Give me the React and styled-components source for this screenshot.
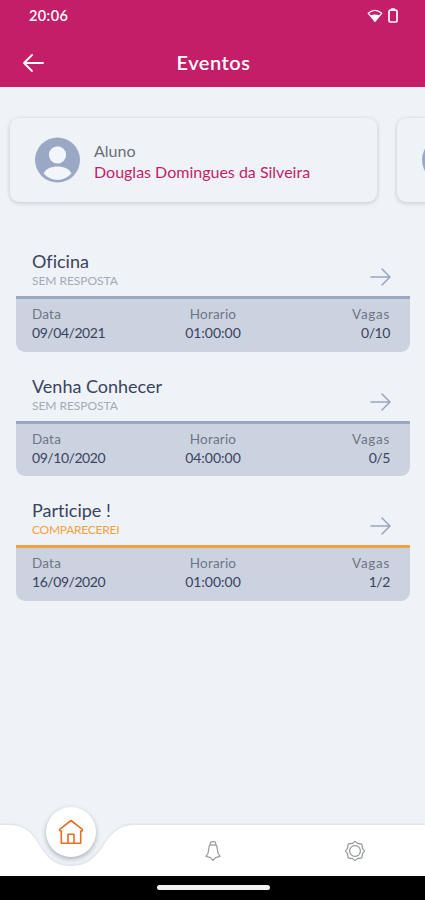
import React from "react"
import styled, { ThemeProvider, createGlobalStyle } from "styled-components"

const theme = {
  primary: "#c41e69",
  background: "#eff3f8",
  dark: "#3a4260",
  grey: "#6e7587",
  muted: "#9ba8c1",
  panel: "#ccd3e0",
  orange: "#f3a13d",
  white: "#fff",
}

const GlobalStyle = createGlobalStyle`
  * {
    box-sizing: border-box;
  }
  body {
    margin: 0;
    font-family: Lato, "Open Sans", sans-serif;
    font-variant-ligatures: none;
    background: ${theme.background};
  }
  p, h1, h2 {
    margin: 0;
    font-weight: 400;
    white-space: nowrap;
  }
  svg {
    display: block;
  }
`

const Screen = styled.div`
  display: flex;
  flex-direction: column;
  width: 425px;
  height: 900px;
  overflow: hidden;
  background: ${({ theme }) => theme.background};
`

const Top = styled.header`
  height: 87px;
  flex-shrink: 0;
  color: ${({ theme }) => theme.white};
  background: ${({ theme }) => theme.primary};
`

const StatusBar = styled.div`
  display: flex;
  align-items: center;
  justify-content: space-between;
  height: 31px;
  padding: 0 27px 0 29px;
`

const Time = styled.p`
  font-size: 14.5px;
  line-height: 18px;
  font-weight: 600;
  letter-spacing: 0.4px;
`

const StatusIcons = styled.div`
  display: flex;
  align-items: center;
  gap: 5px;
`

const TitleBar = styled.div`
  display: grid;
  grid-template-columns: 48px 1fr 48px;
  align-items: center;
  height: 63px;
  margin-right: 21px;
  padding-left: 22px;
`

const Title = styled.h1`
  padding: 0 0 2px 1px;
  text-align: center;
  font-size: 20px;
  line-height: 26px;
  font-weight: 600;
  letter-spacing: 0.5px;
`

const Students = styled.section`
  display: flex;
  gap: 20px;
  padding: 31px 0 0 10px;
  flex-shrink: 0;
`

const StudentCard = styled.div`
  display: flex;
  align-items: center;
  flex-shrink: 0;
  width: 367px;
  height: 84px;
  padding: 0 25px;
  gap: 14px;
  border-radius: 9px;
  box-shadow: 0 1px 4px rgba(70, 80, 95, 0.28);
`

const StudentText = styled.div`
  padding-top: 2px;
`

const StudentLabel = styled.p`
  font-size: 16px;
  line-height: 21px;
  color: #6b6e73;
`

const StudentName = styled(StudentLabel)`
  color: ${({ theme }) => theme.primary};
`

const Events = styled.main`
  display: flex;
  flex-direction: column;
  gap: 21px;
  padding: 46px 15px 0 16px;
`

const Event = styled.article`
  height: 103.6px;
`

const EventHead = styled.div`
  display: flex;
  justify-content: space-between;
  height: 48px;
  padding: 2px 18px 0 16px;
`

const EventTitle = styled.h2`
  font-size: 18px;
  line-height: 23px;
  color: ${({ theme }) => theme.dark};
`

const EventStatus = styled.p`
  font-size: 12px;
  line-height: 16px;
  color: ${({ active, theme }) => (active ? theme.orange : "#a3a9b6")};
  letter-spacing: ${({ active }) => (active ? "-0.25px" : "-0.05px")};
`

const EventArrow = styled.div`
  padding-top: 17px;
`

const EventBody = styled.div`
  display: grid;
  grid-template-columns: 1fr 1fr 1fr;
  height: 55.6px;
  padding: 6px 20px 0 16px;
  background: ${({ theme }) => theme.panel};
  border-top: 3px solid
    ${({ active, theme }) => (active ? theme.orange : theme.muted)};
  border-radius: 0 0 9px 9px;
`

const Field = styled.div`
  text-align: ${({ align }) => align || "left"};
  padding-left: ${({ align }) => (align === "center" ? "4px" : 0)};
`

const FieldLabel = styled.p`
  font-size: 13.5px;
  line-height: 18px;
  color: ${({ theme }) => theme.grey};
  letter-spacing: ${({ spacing }) => spacing || 0.2}px;
`

const FieldValue = styled.p`
  font-size: 14px;
  line-height: 19px;
  color: ${({ theme }) => theme.dark};
  letter-spacing: ${({ spacing }) => spacing || 0}px;
`

const Footer = styled.footer`
  margin-top: auto;
`

const NavBar = styled.nav`
  position: relative;
  display: grid;
  grid-template-columns: 1fr 1fr 1fr;
  height: 52px;
`

const NavShape = styled.svg`
  position: absolute;
  left: 0;
  bottom: 0;
  overflow: visible;
  filter: drop-shadow(0 -1px 1px rgba(90, 100, 115, 0.15));
`

const NavItem = styled.div`
  position: relative;
  display: flex;
  align-items: center;
  justify-content: center;
  padding: 1px 0 0 2px;
`

const HomeButton = styled.div`
  position: absolute;
  top: -17px;
  left: 46px;
  display: flex;
  align-items: center;
  justify-content: center;
  width: 50px;
  height: 50px;
  border-radius: 50%;
  background: ${({ theme }) => theme.white};
  box-shadow: 0 2px 5px rgba(50, 55, 65, 0.36);
`

const SystemBar = styled.div`
  display: flex;
  justify-content: center;
  height: 24px;
  padding: 9px 0 0 1px;
  background: #000;
`

const Handle = styled.div`
  width: 113px;
  height: 5px;
  border-radius: 3px;
  background: #f2f2f2;
`

const Arrow = ({ color, left }) => (
  <svg width="22" height="20" viewBox="0 0 22 20" fill="none">
    <path
      d={left ? "M21 10H2M10 2L2 10L10 18" : "M1 10H20M12 2L20 10L12 18"}
      stroke={color}
      strokeWidth={left ? 1.8 : 1.6}
      strokeLinecap="round"
      strokeLinejoin="round"
    />
  </svg>
)

const WifiIcon = () => (
  <svg width="16" height="14" viewBox="0 0 16 14" fill="none">
    <path
      d="M1.2 4.2Q8-1.5 14.8 4.2L8 12.3Z"
      stroke="#fff"
      strokeWidth="1.3"
      strokeLinejoin="round"
    />
    <path d="M3 6.4Q8 4.6 13 6.4L8 12.5Z" fill="#fff" />
  </svg>
)

const BatteryIcon = () => (
  <svg width="10" height="15" viewBox="0 0 10 15" fill="none">
    <rect x="1" y="2.2" width="8" height="11.8" rx="1.3" stroke="#fff" strokeWidth="1.7" />
    <path d="M3.2 1H6.8" stroke="#fff" strokeWidth="1.6" />
  </svg>
)

const Avatar = () => (
  <svg width="45" height="46" viewBox="0 0 45 46">
    <circle cx="22.5" cy="23" r="22.5" fill="#9ba8c5" />
    <circle cx="22.5" cy="17.8" r="8.6" fill="#f2f5f9" />
    <path d="M8.6 36.5C12 27 33 27 36.4 36.5C29 45 16 45 8.6 36.5Z" fill="#f2f5f9" />
  </svg>
)

const HomeIcon = () => (
  <svg width="26" height="26" viewBox="0 0 26 26" fill="none">
    <path
      d="M1.7 12V10.3L13 1.5L24.3 10.3V12H22.7V24.3H3.3V12H1.7M10 24V15.2H16V24"
      stroke="#e5701f"
      strokeWidth="1.6"
      strokeLinejoin="round"
    />
  </svg>
)

// clapper hangs below the flared body
const BellIcon = () => (
  <svg width="18" height="22" viewBox="0 0 18 22" fill="none">
    <path
      d="M6.3 4.6V3.2Q6.3 1.6 9 1.6T11.7 3.2V4.6M5.4 5.2H12.6L14 13.2L16 16.4L11.5 17.6L9 20.4L6.5 17.6L2 16.4L4 13.2Z"
      stroke="#979c9e"
      strokeWidth="1.2"
      strokeLinejoin="round"
    />
  </svg>
)

const SettingsIcon = () => (
  <svg width="22" height="22" viewBox="0 0 22 22" fill="none">
    <path
      d="M11 1.4L13.5 3.4L17.8 4.2L18.5 8.3L20.6 11L18.5 13.7L17.8 17.8L13.5 18.6L11 20.6L8.5 18.6L4.2 17.8L3.5 13.7L1.4 11L3.5 8.3L4.2 4.2L8.5 3.4Z"
      stroke="#929798"
      strokeWidth="1.2"
      strokeLinejoin="round"
    />
    <circle cx="11" cy="11" r="5.4" stroke="#929798" strokeWidth="1.2" />
  </svg>
)

const events = [
  { title: "Oficina", status: "SEM RESPOSTA", date: "09/04/2021", hour: "01:00:00", places: "0/10" },
  { title: "Venha Conhecer", status: "SEM RESPOSTA", date: "09/10/2020", hour: "04:00:00", places: "0/5" },
  { title: "Participe !", status: "COMPARECEREI", date: "16/09/2020", hour: "01:00:00", places: "1/2", active: true },
]

const EventItem = ({ title, status, date, hour, places, active }) => (
  <Event>
    <EventHead>
      <div>
        <EventTitle>{title}</EventTitle>
        <EventStatus active={active}>{status}</EventStatus>
      </div>
      <EventArrow>
        <Arrow color="#9ba5bf" />
      </EventArrow>
    </EventHead>
    <EventBody active={active}>
      <Field>
        <FieldLabel>Data</FieldLabel>
        <FieldValue spacing={-0.45}>{date}</FieldValue>
      </Field>
      <Field align="center">
        <FieldLabel>Horario</FieldLabel>
        <FieldValue>{hour}</FieldValue>
      </Field>
      <Field align="right">
        <FieldLabel spacing={0.7}>Vagas</FieldLabel>
        <FieldValue spacing={-0.4}>{places}</FieldValue>
      </Field>
    </EventBody>
  </Event>
)

const App = () => (
  <ThemeProvider theme={theme}>
    <GlobalStyle />
    <Screen>
      <Top>
        <StatusBar>
          <Time>20:06</Time>
          <StatusIcons>
            <WifiIcon />
            <BatteryIcon />
          </StatusIcons>
        </StatusBar>
        <TitleBar>
          <Arrow left color="#fff" />
          <Title>Eventos</Title>
        </TitleBar>
      </Top>
      <Students>
        <StudentCard>
          <Avatar />
          <StudentText>
            <StudentLabel>Aluno</StudentLabel>
            <StudentName>Douglas Domingues da Silveira</StudentName>
          </StudentText>
        </StudentCard>
        <StudentCard>
          <Avatar />
        </StudentCard>
      </Students>
      <Events>
        {events.map(event => (
          <EventItem key={event.title} {...event} />
        ))}
      </Events>
      <Footer>
        <NavBar>
          <NavShape width="425" height="52" viewBox="0 0 425 52">
            <path
              d="M0 1H10C25 1 33 10 40 22C47 35 56 42 71 42C86 42 94 35 102 24C110 11 118 1 134 1H425V52H0Z"
              fill="#fff"
            />
          </NavShape>
          <NavItem>
            <HomeButton>
              <HomeIcon />
            </HomeButton>
          </NavItem>
          <NavItem>
            <BellIcon />
          </NavItem>
          <NavItem>
            <SettingsIcon />
          </NavItem>
        </NavBar>
        <SystemBar>
          <Handle />
        </SystemBar>
      </Footer>
    </Screen>
  </ThemeProvider>
)

export default App
